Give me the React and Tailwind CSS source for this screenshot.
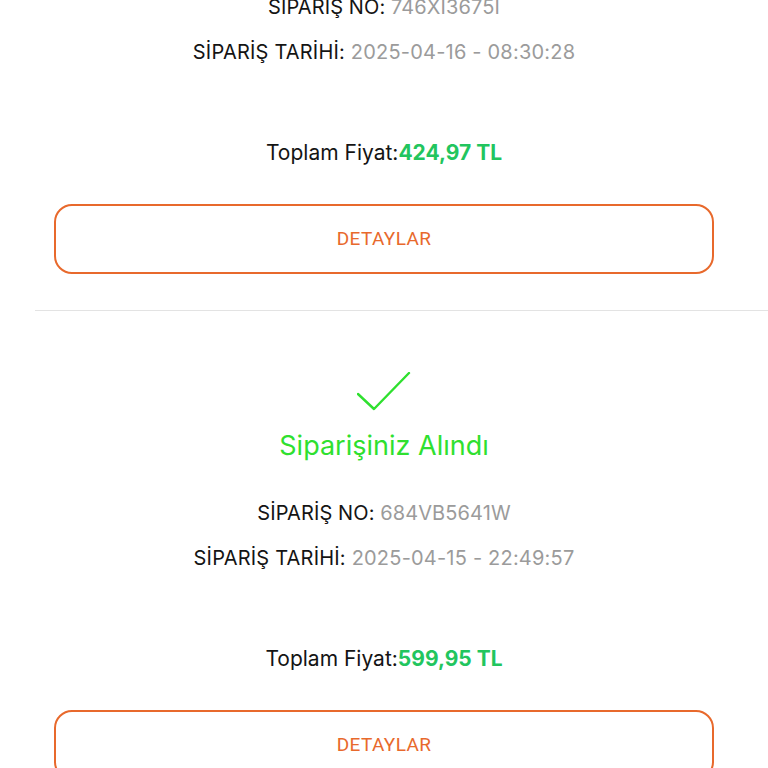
import React from 'react';

const orders = [
  { no: '7Y3BV8215K', date: '2025-04-17 - 11:12:45', total: '312,50 TL' },
  { no: '746XI3675I', date: '2025-04-16 - 08:30:28', total: '424,97 TL' },
  { no: '684VB5641W', date: '2025-04-15 - 22:49:57', total: '599,95 TL' },
];

const CheckIcon = () => (
  <svg width="56" height="40" viewBox="0 0 56 40" fill="none">
    <path d="M1 22 L17 37 L52 1" stroke="#2fe02f" strokeWidth="2.4" strokeLinecap="round" strokeLinejoin="round" />
  </svg>
);

const OrderCard = ({ order }) => (
  <div className="flex flex-col">
    <div className="ml-[35px] h-px bg-[#e3e3e3]" />
    <div className="flex flex-col items-center">
      <div className="mt-[61px] h-[40px] pl-[2px]">
        <CheckIcon />
      </div>
      <h2 className="mt-[17px] text-[27px] leading-[34px] text-[#2fe02f]">Siparişiniz Alındı</h2>
      <p className="mt-[36px] text-[20px] leading-[28px] tracking-[0.1px] text-[#141414]">
        SİPARİŞ NO: <span className="text-[#9b9b9b]">{order.no}</span>
      </p>
      <p className="mt-[17px] text-[20px] leading-[28px] tracking-[0.2px] text-[#141414]">
        SİPARİŞ TARİHİ: <span className="text-[#9b9b9b]">{order.date}</span>
      </p>
      <p className="mt-[73px] text-[21px] leading-[28px] text-[#141414]">
        Toplam Fiyat:<span className="font-bold text-[#22c55e]">{order.total}</span>
      </p>
    </div>
    <div className="mt-[37px] mb-[36px] px-[54px]">
      <button className="w-full h-[70px] rounded-[18px] border-2 border-[#e8692c] bg-white text-[#e8692c] text-[19px] tracking-[0.4px] font-['Roboto',sans-serif]">
        DETAYLAR
      </button>
    </div>
  </div>
);

export default function App() {
  return (
    <div className="w-[768px] h-[768px] overflow-hidden bg-white font-['Inter',sans-serif]">
      <div className="-mt-[702px]">
        {orders.map(o => <OrderCard key={o.no} order={o} />)}
      </div>
    </div>
  );
}
